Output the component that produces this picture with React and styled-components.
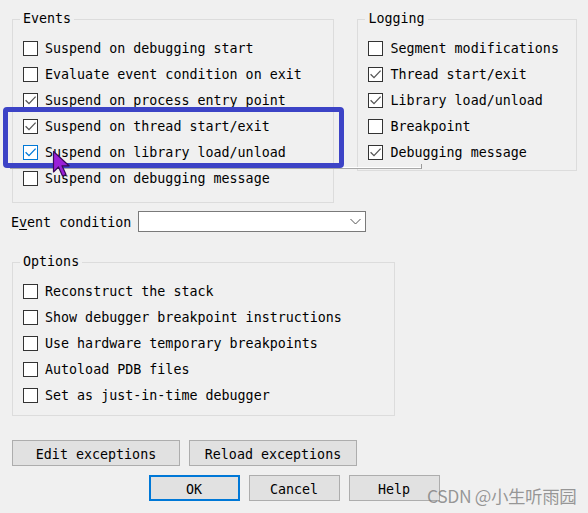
import React from "react";
import styled, { createGlobalStyle } from "styled-components";

const Global = createGlobalStyle`
  html, body { margin: 0; padding: 0; background: #f0f0f0; }
  body { font-family: "DejaVu Sans Mono", "Liberation Mono", monospace; font-size: 13.33px; color: #000; }
`;

const Screen = styled.div`
  position: relative;
  width: 588px;
  height: 513px;
  overflow: hidden;
  background: #f0f0f0;
`;

const Page = styled.div`
  display: flex;
  flex-direction: column;
  padding: 12px 11px 0 11px;
`;

const TopRow = styled.div`
  display: flex;
  align-items: flex-start;
  gap: 23px;
  margin-left: 1px;
`;

const Group = styled.fieldset`
  margin: 0;
  min-width: 0;
  box-sizing: border-box;
  width: ${(p) => p.$w}px;
  border: 1px solid #dcdcdc;
  padding: ${(p) => p.$pt}px 0 ${(p) => p.$pb}px 10px;
  display: flex;
  flex-direction: column;
`;

const Legend = styled.legend`
  margin-left: -3px;
  padding: 0 3px;
  line-height: 14px;
  font-size: 13.33px;
`;

const Row = styled.div`
  display: flex;
  align-items: center;
  height: 26px;
  gap: 7px;
  white-space: nowrap;
`;

const Box = styled.span`
  box-sizing: border-box;
  width: 15px;
  height: 15px;
  flex: none;
  background: #fff;
  border: 1px solid ${(p) => (p.$focus ? "#0078d7" : "#333")};
  display: flex;
  align-items: center;
  justify-content: center;
`;

const Label = styled.span`
  line-height: 16px;
  padding-top: 2px;
`;

const Check = ({ checked, focus, children }) => (
  <Row>
    <Box $focus={focus}>
      {checked && (
        <svg width="13" height="13" viewBox="0 0 13 13">
          <path
            d="M1.6 6.2 L5 9.6 L11.6 2.6"
            fill="none"
            stroke={focus ? "#0078d7" : "#555"}
            strokeWidth="1.3"
          />
        </svg>
      )}
    </Box>
    <Label>{children}</Label>
  </Row>
);

const CondRow = styled.div`
  display: flex;
  align-items: center;
  gap: 7px;
  margin-top: 8px;
`;

const CondLabel = styled.span`
  padding-top: 1px;
`;

const Underline = styled.span`
  text-decoration: underline;
  text-underline-offset: 2px;
`;

const Combo = styled.div`
  box-sizing: border-box;
  width: 228px;
  height: 21px;
  background: #fff;
  border: 1px solid #7a7a7a;
  display: flex;
  align-items: center;
  justify-content: flex-end;
  padding-right: 4px;
`;

const OptionsWrap = styled.div`
  margin-top: 23px;
  margin-left: 1px;
`;

const BtnRow = styled.div`
  display: flex;
  gap: ${(p) => p.$gap}px;
  margin-top: ${(p) => p.$mt}px;
  margin-left: ${(p) => (p.$center ? 0 : 1)}px;
  justify-content: ${(p) => (p.$center ? "center" : "flex-start")};
`;

const Button = styled.button`
  box-sizing: border-box;
  width: ${(p) => p.$w}px;
  height: 26px;
  margin: 0;
  padding: 2px 0 0 0;
  font-family: "DejaVu Sans Mono", "Liberation Mono", monospace;
  font-size: 13.33px;
  color: #000;
  background: #e1e1e1;
  border: ${(p) => (p.$default ? "2px solid #0078d7" : "1px solid #adadad")};
`;

const Highlight = styled.div`
  position: absolute;
  left: 3px;
  top: 107px;
  width: 341px;
  height: 61px;
  box-sizing: border-box;
  border: 5px solid #3c43c6;
  border-radius: 4px;
`;

const Streak = styled.div`
  position: absolute;
  left: 10px;
  top: 167px;
  width: 411px;
  height: 2px;
  box-sizing: border-box;
  border-top: 1px solid #ffffff;
  border-bottom: 1px solid #a8a8a8;
  &::after {
    content: "";
    position: absolute;
    right: -1px;
    top: -4px;
    width: 1px;
    height: 5px;
    background: #9a9a9a;
  }
`;

const Cursor = styled.svg`
  position: absolute;
  left: 52px;
  top: 150px;
`;

const Watermark = styled.div`
  position: absolute;
  left: 427px;
  top: 483px;
  font-family: "Noto Sans CJK SC", "Noto Sans", sans-serif;
  font-size: 17.5px;
  letter-spacing: -0.4px;
  color: rgba(120, 120, 120, 0.75);
  white-space: nowrap;
`;

export default function App() {
  return (
    <Screen>
      <Global />
      <Page>
        <TopRow>
          <Group $w={323} $pt={9} $pb={11}>
            <Legend>Events</Legend>
            <Check>Suspend on debugging start</Check>
            <Check>Evaluate event condition on exit</Check>
            <Check checked>Suspend on process entry point</Check>
            <Check checked>Suspend on thread start/exit</Check>
            <Check checked focus>Suspend on library load/unload</Check>
            <Check>Suspend on debugging message</Check>
          </Group>
          <Group $w={220} $pt={9} $pb={5}>
            <Legend>Logging</Legend>
            <Check>Segment modifications</Check>
            <Check checked>Thread start/exit</Check>
            <Check checked>Library load/unload</Check>
            <Check>Breakpoint</Check>
            <Check checked>Debugging message</Check>
          </Group>
        </TopRow>
        <CondRow>
          <CondLabel>
            E<Underline>v</Underline>ent condition
          </CondLabel>
          <Combo>
            <svg width="11" height="7" viewBox="0 0 11 7">
              <path d="M0.5 1 L5.5 6 L10.5 1" fill="none" stroke="#555" strokeWidth="1" />
            </svg>
          </Combo>
        </CondRow>
        <OptionsWrap>
          <Group $w={383} $pt={9} $pb={7}>
            <Legend>Options</Legend>
            <Check>Reconstruct the stack</Check>
            <Check>Show debugger breakpoint instructions</Check>
            <Check>Use hardware temporary breakpoints</Check>
            <Check>Autoload PDB files</Check>
            <Check>Set as just-in-time debugger</Check>
          </Group>
        </OptionsWrap>
        <BtnRow $gap={9} $mt={24}>
          <Button $w={168}>Edit exceptions</Button>
          <Button $w={168}>Reload exceptions</Button>
        </BtnRow>
        <BtnRow $gap={9} $mt={9} $center>
          <Button $w={91} $default>OK</Button>
          <Button $w={91}>Cancel</Button>
          <Button $w={91}>Help</Button>
        </BtnRow>
      </Page>
      <Streak />
      <Highlight />
      <Cursor width="20" height="28" viewBox="0 0 20 28">
        <path
          d="M1.5 1.5 L1.5 22 L6.5 17 L10.5 26 L14 24.5 L10 15.8 L17 15.8 Z"
          fill="#9a1fd8"
          stroke="#3a0a5a"
          strokeWidth="1.2"
          strokeLinejoin="round"
        />
      </Cursor>
      <Watermark>CSDN @小生听雨园</Watermark>
    </Screen>
  );
}
